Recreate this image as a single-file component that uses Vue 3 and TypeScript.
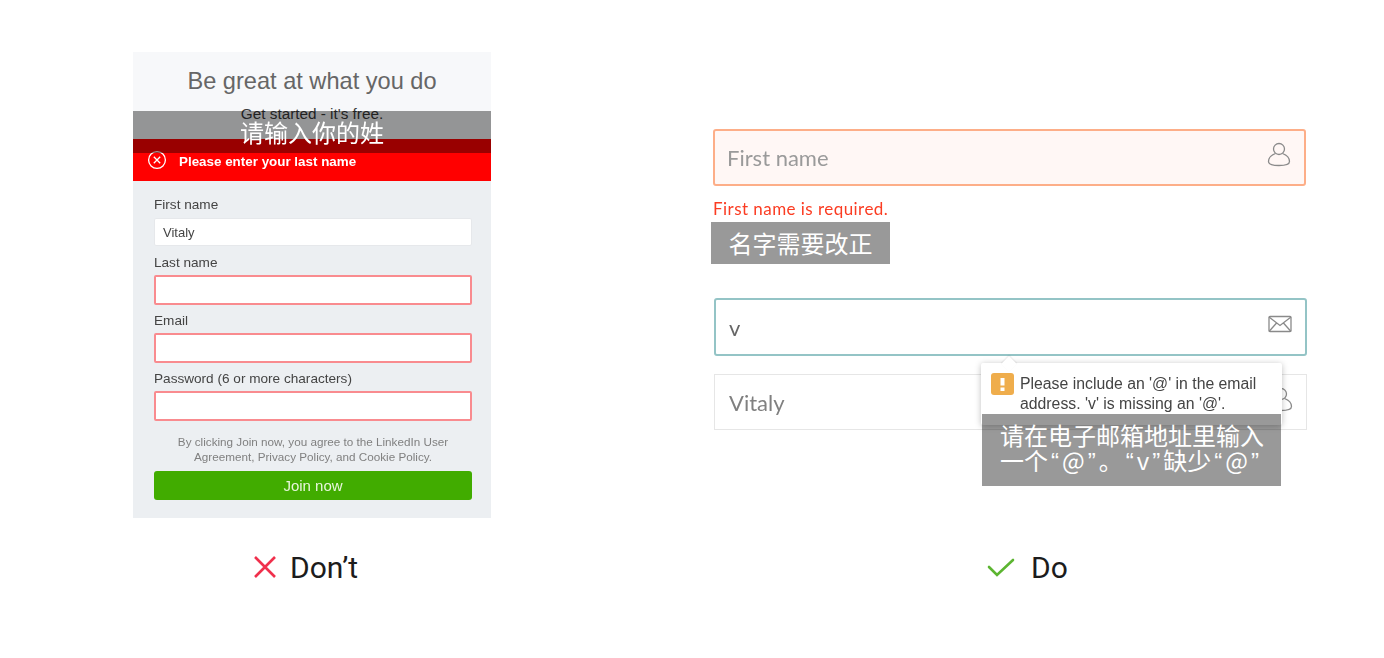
<script setup lang="ts">
interface FormRow {
  label: string
  value: string
  invalid: boolean
}

const rows: FormRow[] = [
  { label: 'First name', value: 'Vitaly', invalid: false },
  { label: 'Last name', value: '', invalid: true },
  { label: 'Email', value: '', invalid: true },
  { label: 'Password (6 or more characters)', value: '', invalid: true }
]
</script>

<template>
  <div class="page">
    <div class="card">
      <div class="shot">
        <div class="head">
          <h1>Be great at what you do</h1>
          <p>Get started - it's free.</p>
        </div>
        <div class="banner">
          <svg width="20" height="20" viewBox="0 0 20 20" fill="none" stroke="#fff" stroke-width="1.3">
            <circle cx="10" cy="10" r="8.4" />
            <path d="M6.8 6.8l6.4 6.4M13.2 6.8l-6.4 6.4" />
          </svg>
          <span>Please enter your last name</span>
        </div>
        <div class="form">
          <div v-for="row in rows" :key="row.label" class="row">
            <label>{{ row.label }}</label>
            <div class="box" :class="{ invalid: row.invalid }">{{ row.value }}</div>
          </div>
          <p class="terms">By clicking Join now, you agree to the LinkedIn User Agreement, Privacy Policy, and Cookie Policy.</p>
          <div class="join">Join now</div>
        </div>
      </div>
      <div class="note note-top">请输入你的姓</div>
    </div>

    <div class="right">
      <div class="field field-error">
        <span class="placeholder">First name</span>
        <svg class="icon" width="26" height="26" viewBox="0 0 26 26" fill="none" stroke="#8a8a8a" stroke-width="1.3">
          <circle cx="13" cy="7" r="5.5" />
          <path d="M9.500 11.500C5.500 13 2.500 15.500 2.500 19.500c0 3 3.500 4 10.500 4s10.500-1 10.500-4c0-4-3-6.500-7-8" />
        </svg>
      </div>
      <p class="error-text">First name is required.</p>
      <div class="note note-name">名字需要改正</div>

      <div class="group">
        <div class="field field-focus">
          <span class="typed">v</span>
          <svg class="icon mail" width="24" height="18" viewBox="0 0 24 18" fill="none" stroke="#8a8a8a" stroke-width="1.3">
            <rect x="1" y="1.500" width="22" height="15" rx="1" />
            <path d="M1 2l11 8.500L23 2M1 16.500l8-9M23 16.500l-8-9" />
          </svg>
        </div>
        <div class="field field-plain">
          <span class="placeholder dark">Vitaly</span>
          <svg class="icon" width="26" height="26" viewBox="0 0 26 26" fill="none" stroke="#8a8a8a" stroke-width="1.3">
            <circle cx="13" cy="7" r="5.5" />
            <path d="M9.500 11.500C5.500 13 2.500 15.500 2.500 19.500c0 3 3.500 4 10.500 4s10.500-1 10.500-4c0-4-3-6.500-7-8" />
          </svg>
        </div>

        <div class="tip">
          <span class="tip-arrow"></span>
          <svg class="warn" width="23" height="22" viewBox="0 0 23 22">
            <rect width="23" height="22" rx="3" fill="#efad4c" />
            <rect x="9.500" y="5" width="4" height="7.500" fill="#fff" />
            <rect x="9.500" y="14.500" width="4" height="3.500" fill="#fff" />
          </svg>
          <p>Please include an '@' in the email address. 'v' is missing an '@'.</p>
        </div>
        <div class="note note-tip">请在电子邮箱地址里输入<br />一个<span class="q">“</span>@<span class="q">”</span>。<span class="q">“</span>v<span class="q">”</span>缺少<span class="q">“</span>@<span class="q">”</span></div>
      </div>
    </div>

    <div class="caption caption-left">
      <svg width="24" height="24" viewBox="0 0 24 24" fill="none" stroke="#f0304c" stroke-width="2.600">
        <path d="M2 2l20 20M22 2L2 22" />
      </svg>
      <span>Don’t</span>
    </div>
    <div class="caption caption-right">
      <svg width="28" height="20" viewBox="0 0 28 20" fill="none" stroke="#5cb531" stroke-width="2.600" stroke-linecap="round">
        <path d="M2 10l8 8L26 3" />
      </svg>
      <span>Do</span>
    </div>
  </div>
</template>

<style scoped>
.page {
  display: grid;
  grid-template-columns: 358px 596px;
  grid-template-rows: 466px auto;
  column-gap: 220px;
  row-gap: 33px;
  padding: 52px 0 0 133px;
  height: 658px;
  box-sizing: border-box;
  overflow: hidden;
  background: #fff;
  font-family: "Liberation Sans", sans-serif;
}

.card {
  position: relative;
  background: #eceff2;
}

.shot {
  height: 100%;
  filter: blur(0.45px);
}

.head {
  height: 87px;
  background: #f7f8fa;
  text-align: center;
}

.head h1 {
  margin: 0;
  padding-top: 14px;
  font-size: 23.600px;
  font-weight: 400;
  line-height: 30px;
  color: #666;
}

.head p {
  margin: 0;
  padding-top: 10px;
  font-size: 15.300px;
  line-height: 16px;
  color: #3a3a3a;
}

.banner {
  display: flex;
  align-items: center;
  gap: 12px;
  height: 42px;
  padding-left: 14px;
  box-sizing: border-box;
  background: #f00;
  color: #fff;
  font-size: 13.400px;
  font-weight: 700;
}

.banner span {
  padding-top: 2px;
}

.form {
  padding: 15px 19px 0 21px;
}

.row {
  height: 58px;
}

.row label {
  display: block;
  height: 22px;
  font-size: 13.600px;
  line-height: 18px;
  color: #444;
}

.box {
  height: 28px;
  padding-left: 8px;
  box-sizing: border-box;
  background: #fff;
  border: 1px solid #e6e8eb;
  border-radius: 2px;
  font-size: 13px;
  line-height: 28px;
  color: #444;
}

.box.invalid {
  height: 30px;
  margin-top: -1px;
  border: 2px solid #f98b8f;
}

.terms {
  margin: 0;
  padding: 6px 6px 0;
  font-size: 11.700px;
  line-height: 15px;
  text-align: center;
  color: #808080;
}

.join {
  height: 29px;
  margin-top: 7px;
  border-radius: 3px;
  background: #41ac00;
  color: #e8f6dc;
  font-size: 15px;
  line-height: 29px;
  text-align: center;
}

.note {
  background: rgba(0, 0, 0, 0.4);
  color: #fff;
  font-family: "Noto Sans CJK SC", sans-serif;
  font-size: 24px;
}

.note-top {
  position: absolute;
  top: 59px;
  left: 0;
  right: 0;
  height: 42px;
  line-height: 42px;
  text-align: center;
}

.right {
  padding-top: 77px;
}

.field {
  display: flex;
  align-items: center;
  justify-content: space-between;
  box-sizing: border-box;
  padding: 0 12px;
  font-family: Lato, sans-serif;
  font-size: 22px;
}

.field > * {
  filter: blur(0.4px);
}

.icon {
  margin-bottom: 5px;
}

.icon.mail {
  margin-bottom: 7px;
}

.field-error {
  width: 593px;
  height: 57px;
  margin-left: 2px;
  background: #fff7f5;
  border: 2px solid #fdae88;
  border-radius: 3px;
}

.field-focus {
  width: 593px;
  height: 58px;
  margin-left: 3px;
  padding-left: 13px;
  padding-right: 13px;
  background: #fff;
  border: 2px solid #94c4c6;
  border-radius: 3px;
}

.field-plain {
  width: 593px;
  height: 56px;
  margin: 18px 0 0 3px;
  padding-left: 14px;
  background: #fff;
  border: 1px solid #e6e6e6;
}

.placeholder {
  color: #9a9a9a;
}

.placeholder.dark {
  color: #808080;
}

.typed {
  color: #666;
}

.error-text {
  margin: 13px 0 0 2px;
  font-family: Lato, sans-serif;
  font-size: 17px;
  letter-spacing: 0.45px;
  line-height: 19px;
  color: #fb3c22;
  filter: blur(0.3px);
}

.note-name {
  width: 179px;
  height: 42px;
  line-height: 42px;
  margin-top: 4px;
  text-align: center;
}

.group {
  position: relative;
  margin-top: 34px;
}

.tip {
  position: absolute;
  top: 65px;
  left: 270px;
  display: flex;
  gap: 6px;
  width: 301px;
  height: 62px;
  padding: 10px 0 0 10px;
  box-sizing: border-box;
  background: #fff;
  border-radius: 2px;
  box-shadow: 0 1px 6px rgba(0, 0, 0, 0.25);
}

.tip-arrow {
  position: absolute;
  top: -7px;
  left: 20px;
  width: 16px;
  height: 16px;
  background: #fff;
  transform: rotate(45deg) scale(0.7);
  box-shadow: -1px -1px 2px rgba(0, 0, 0, 0.1);
}

.warn {
  flex: none;
  filter: blur(0.4px);
}

.tip p {
  position: relative;
  margin: 1px 0 0;
  width: 250px;
  font-size: 15.800px;
  line-height: 20px;
  color: #444;
  filter: blur(0.3px);
}

.note-tip {
  position: absolute;
  top: 116px;
  left: 271px;
  width: 299px;
  height: 72px;
  padding: 8px 0 0 18px;
  box-sizing: border-box;
  line-height: 25px;
  white-space: nowrap;
}

.q {
  display: inline-block;
  width: 14px;
  font-family: "Liberation Sans", sans-serif;
  text-align: center;
}

.caption {
  display: flex;
  align-items: center;
  height: 32px;
  font-family: Roboto, sans-serif;
  font-size: 30px;
  color: #1c1c1c;
}

.caption-left {
  gap: 13px;
  padding-left: 120px;
}

.caption-right {
  gap: 16px;
  padding-left: 276px;
}
</style>
